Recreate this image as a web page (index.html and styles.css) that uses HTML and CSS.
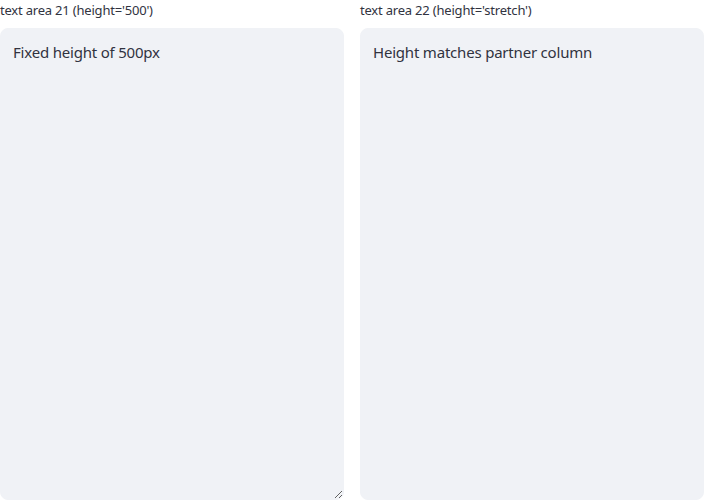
FILE: index.html
```html
<!DOCTYPE html>
<html>
<head>
<meta charset="utf-8">
<link rel="stylesheet" href="styles.css">
</head>
<body>
<div class="row">
  <div class="col">
    <label class="label">text area 21 (height='500')</label>
    <textarea class="area fixed">Fixed height of 500px</textarea>
  </div>
  <div class="col">
    <label class="label">text area 22 (height='stretch')</label>
    <textarea class="area stretch">Height matches partner column</textarea>
  </div>
</div>
</body>
</html>
```

FILE: styles.css
```css
html, body {
  margin: 0;
  padding: 0;
  background: #ffffff;
}
body {
  font-family: "Source Sans Pro", "Noto Sans", "Liberation Sans", sans-serif;
  color: rgb(49, 51, 63);
}
.row {
  display: flex;
  gap: 16px;
  width: 704px;
  height: 501px;
}
.col {
  flex: 1;
  display: flex;
  flex-direction: column;
}
.label {
  display: block;
  font-size: 13px;
  line-height: 20px;
  height: 24px;
  margin-bottom: 4px;
  letter-spacing: -0.2px;
}
.area {
  box-sizing: border-box;
  width: 100%;
  margin: 0;
  border: 1px solid #f0f2f6;
  border-radius: 8px;
  background: #f0f2f6;
  color: rgb(49, 51, 63);
  font-family: inherit;
  font-size: 15px;
  line-height: 1.6;
  padding: 11px 12px;
  outline: none;
  letter-spacing: -0.2px;
}
.fixed {
  height: 472px;
  resize: vertical;
}
.stretch {
  flex: 1;
  resize: none;
  margin-bottom: 1px;
}
```
